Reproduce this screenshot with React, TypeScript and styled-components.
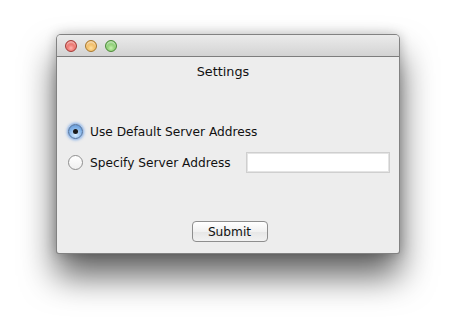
import React, { FC, useState } from "react";
import styled, { createGlobalStyle } from "styled-components";

const GlobalStyle = createGlobalStyle`
  html, body {
    margin: 0;
    padding: 0;
    background: #fff;
  }
  body {
    font-family: "DejaVu Sans", "Liberation Sans", sans-serif;
  }
`;

const Page = styled.div`
  width: 456px;
  height: 333px;
  padding: 34px 0 0 56px;
  box-sizing: border-box;
  overflow: hidden;
`;

const Window = styled.div`
  width: 344px;
  height: 220px;
  box-sizing: border-box;
  display: flex;
  flex-direction: column;
  border-radius: 5px 5px 3px 3px;
  border: 1px solid rgba(0, 0, 0, 0.45);
  background: #ededed;
  box-shadow: 0 22px 34px rgba(0, 0, 0, 0.62), 0 0 12px rgba(0, 0, 0, 0.22);
  overflow: hidden;
`;

const TitleBar = styled.div`
  height: 21px;
  flex: none;
  display: flex;
  align-items: center;
  gap: 8px;
  padding-left: 8px;
  background: linear-gradient(#ebebeb, #d3d3d3);
  border-bottom: 1px solid #7d7d7d;
`;

const Light = styled.span<{ $c1: string; $c2: string; $edge: string }>`
  width: 12px;
  height: 12px;
  border-radius: 50%;
  box-sizing: border-box;
  border: 1px solid ${(p) => p.$edge};
  background: radial-gradient(
    circle at 50% 70%,
    ${(p) => p.$c1} 0%,
    ${(p) => p.$c2} 75%
  );
  box-shadow: inset 0 2px 2px rgba(255, 255, 255, 0.6);
`;

const Content = styled.div`
  flex: 1;
  display: flex;
  flex-direction: column;
  align-items: center;
  font-size: 12.2px;
  color: #111;
`;

const Title = styled.div`
  margin-top: 7px;
  margin-right: 10px;
  font-size: 12.8px;
  line-height: 16px;
`;

const Options = styled.div`
  align-self: stretch;
  display: flex;
  flex-direction: column;
  gap: 10px;
  margin-top: 41px;
  padding-left: 11px;
`;

const Row = styled.label`
  display: flex;
  align-items: center;
  height: 21px;
  gap: 7px;
`;

const Radio = styled.span<{ $on: boolean }>`
  width: 15px;
  height: 15px;
  flex: none;
  border-radius: 50%;
  box-sizing: border-box;
  display: flex;
  align-items: center;
  justify-content: center;
  border: 1px solid ${(p) => (p.$on ? "#4d6f9c" : "#8f8f8f")};
  background: ${(p) =>
    p.$on
      ? "radial-gradient(circle at 50% 75%, #d7ecff 0%, #7fb0e6 60%, #5b8fcf 100%)"
      : "linear-gradient(#ffffff, #f0f0f0)"};
  box-shadow: ${(p) =>
    p.$on ? "0 0 3px 1px rgba(90, 150, 230, 0.8)" : "none"};
  &::after {
    content: "";
    display: ${(p) => (p.$on ? "block" : "none")};
    width: 5px;
    height: 5px;
    border-radius: 50%;
    background: #1a1a1a;
  }
`;

const TextField = styled.input`
  margin-left: 8px;
  width: 144px;
  height: 21px;
  box-sizing: border-box;
  border: 1px solid #cfcfcf;
  box-shadow: inset 0 0 0 1px #e4e4e4;
  background: #fff;
  outline: none;
  padding: 0 4px;
  font: inherit;
`;

const Footer = styled.div`
  margin-top: auto;
  margin-bottom: 11px;
  padding-left: 3px;
`;

const Button = styled.button`
  width: 76px;
  height: 21px;
  box-sizing: border-box;
  border: 1px solid #8e8e8e;
  border-radius: 4px;
  background: linear-gradient(#ffffff, #f1f1f1 50%, #e6e6e6 51%, #f2f2f2);
  font-family: "DejaVu Sans", "Liberation Sans", sans-serif;
  font-size: 12.2px;
  color: #111;
  padding: 0;
`;

const App: FC = () => {
  const [mode, setMode] = useState<"default" | "specify">("default");

  return (
    <Page>
      <GlobalStyle />
      <Window>
        <TitleBar>
          <Light $c1="#ffb3ae" $c2="#e0443d" $edge="#a33b36" />
          <Light $c1="#ffe0a0" $c2="#e9a43a" $edge="#a8782d" />
          <Light $c1="#c8f0b0" $c2="#62b848" $edge="#4c8a38" />
        </TitleBar>
        <Content>
          <Title>Settings</Title>
          <Options>
            <Row onClick={() => setMode("default")}>
              <Radio $on={mode === "default"} />
              Use Default Server Address
            </Row>
            <Row onClick={() => setMode("specify")}>
              <Radio $on={mode === "specify"} />
              Specify Server Address
              <TextField />
            </Row>
          </Options>
          <Footer>
            <Button>Submit</Button>
          </Footer>
        </Content>
      </Window>
    </Page>
  );
};

export default App;
